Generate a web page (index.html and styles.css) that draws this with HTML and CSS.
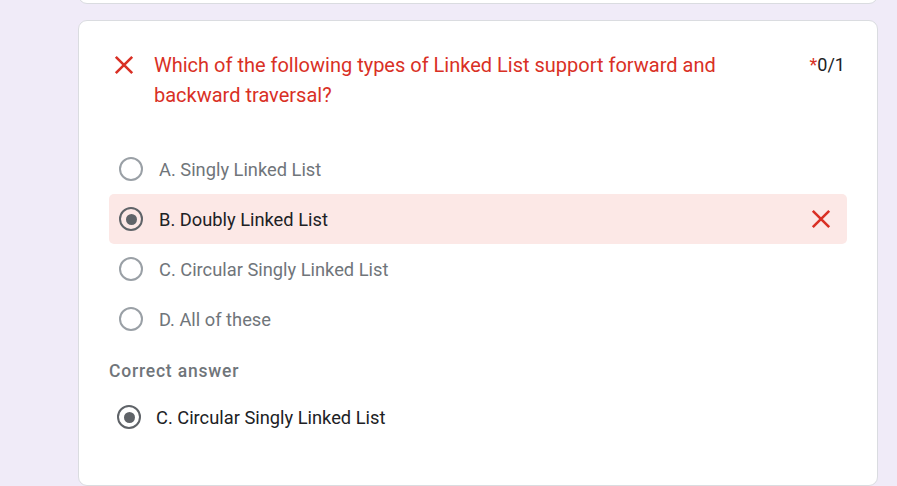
FILE: index.html
```html
<!DOCTYPE html>
<html lang="en">
<head>
<meta charset="utf-8">
<title>Quiz result</title>
<link rel="stylesheet" href="styles.css">
</head>
<body>
<div class="page">
  <div class="card card-prev"></div>
  <div class="card">
    <div class="q-head">
      <span class="q-icon">
        <svg width="24" height="24" viewBox="0 0 24 24"><path d="M3.8 3.8 L20.2 20.2 M20.2 3.8 L3.8 20.2" stroke="#d93025" stroke-width="2.6" fill="none"/></svg>
      </span>
      <div class="q-text">Which of the following types of Linked List support forward and backward traversal?</div>
      <div class="q-score"><span class="req">*</span>0/1</div>
    </div>
    <div class="options">
      <div class="opt">
        <span class="radio"></span>
        <span class="opt-label">A. Singly Linked List</span>
      </div>
      <div class="opt opt-wrong">
        <span class="radio radio-on"></span>
        <span class="opt-label">B. Doubly Linked List</span>
        <svg class="wrong-mark" width="24" height="24" viewBox="0 0 24 24"><path d="M3.8 3.8 L20.2 20.2 M20.2 3.8 L3.8 20.2" stroke="#d93025" stroke-width="2.6" fill="none"/></svg>
      </div>
      <div class="opt">
        <span class="radio"></span>
        <span class="opt-label">C. Circular Singly Linked List</span>
      </div>
      <div class="opt">
        <span class="radio"></span>
        <span class="opt-label">D. All of these</span>
      </div>
    </div>
    <div class="correct-title">Correct answer</div>
    <div class="opt opt-correct">
      <span class="radio radio-on"></span>
      <span class="opt-label">C. Circular Singly Linked List</span>
    </div>
  </div>
</div>
</body>
</html>
```

FILE: styles.css
```css
html, body {
  margin: 0;
  padding: 0;
  background: #f0ebf8;
  font-family: Roboto, "Liberation Sans", Arial, sans-serif;
  height: 486px;
  overflow: hidden;
}

.page {
  display: flex;
  flex-direction: column;
  gap: 16px;
  width: 800px;
  margin-left: 78px;
}

.card {
  background: #fff;
  border: 1px solid #dadce0;
  border-radius: 9px;
  padding: 29px 30px 43px 30px;
}

.card-prev {
  height: 20px;
  padding: 0;
  margin-top: -18px;
}

.q-head {
  display: flex;
  align-items: flex-start;
}

.q-icon {
  width: 24px;
  height: 24px;
  margin: 3px 18px 0 3px;
  flex: none;
}

.q-icon svg { display: block; }

.q-text {
  flex: 1;
  color: #d93025;
  font-size: 20px;
  line-height: 30px;
  padding-right: 40px;
}

.q-score {
  color: #202124;
  font-size: 18px;
  line-height: 30px;
  padding-right: 2px;
}

.req { color: #d93025; }

.options {
  margin-top: 34px;
  display: flex;
  flex-direction: column;
}

.opt {
  display: flex;
  align-items: center;
  height: 50px;
  padding-left: 10px;
  gap: 16px;
  border-radius: 5px;
}

.opt-wrong {
  background: #fce8e6;
}

.radio {
  width: 24px;
  height: 24px;
  box-sizing: border-box;
  border: 2.3px solid #9aa0a6;
  border-radius: 50%;
  flex: none;
  position: relative;
}

.radio-on {
  border-color: #5f6368;
}

.radio-on::after {
  content: "";
  position: absolute;
  left: 50%;
  top: 50%;
  width: 11px;
  height: 11px;
  margin: -5.5px 0 0 -5.5px;
  border-radius: 50%;
  background: #5f6368;
}

.opt-label {
  font-size: 18.3px;
  color: #70757a;
  flex: 1;
}

.opt-wrong .opt-label,
.opt-correct .opt-label {
  color: #202124;
}

.wrong-mark {
  margin-right: 14px;
  flex: none;
}

.correct-title {
  margin-top: 15px;
  font-size: 17.5px;
  line-height: 24px;
  font-weight: 500;
  letter-spacing: 0.8px;
  color: #70757a;
}

.opt-correct {
  margin-top: 9px;
  padding-left: 8px;
  gap: 15px;
}
```
